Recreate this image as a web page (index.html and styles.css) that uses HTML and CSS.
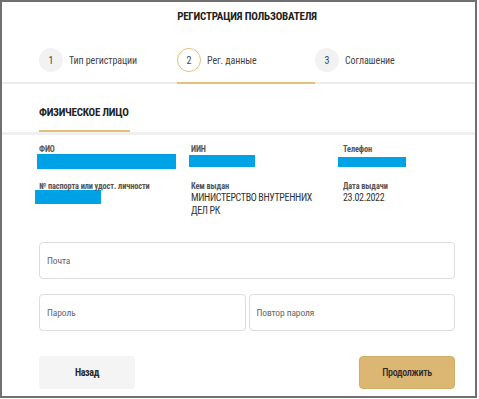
FILE: index.html
```html
<!DOCTYPE html>
<html lang="ru">
<head>
    <meta charset="UTF-8">
    <meta name="viewport" content="width=device-width, initial-scale=1.0">
    <title>Регистрация пользователя</title>
    <link rel="stylesheet" href="styles.css">
</head>
<body>
    <div class="frame">
        <h1 class="title">РЕГИСТРАЦИЯ ПОЛЬЗОВАТЕЛЯ</h1>

        <div class="steps">
            <div class="step">
                <span class="step-num">1</span>
                <span class="step-label">Тип регистрации</span>
            </div>
            <div class="step active">
                <span class="step-num">2</span>
                <span class="step-label">Рег. данные</span>
            </div>
            <div class="step">
                <span class="step-num">3</span>
                <span class="step-label">Соглашение</span>
            </div>
        </div>

        <div class="tabs">
            <div class="tab active">ФИЗИЧЕСКОЕ ЛИЦО</div>
        </div>

        <div class="info">
            <div class="field">
                <div class="field-label">ФИО</div>
                <div class="redact redact-name"></div>
            </div>
            <div class="field">
                <div class="field-label">ИИН</div>
                <div class="redact redact-iin"></div>
            </div>
            <div class="field">
                <div class="field-label">Телефон</div>
                <div class="redact redact-phone"></div>
            </div>
            <div class="field">
                <div class="field-label">№ паспорта или удост. личности</div>
                <div class="redact redact-doc"></div>
            </div>
            <div class="field">
                <div class="field-label">Кем выдан</div>
                <div class="field-value">МИНИСТЕРСТВО ВНУТРЕННИХ ДЕЛ РК</div>
            </div>
            <div class="field">
                <div class="field-label">Дата выдачи</div>
                <div class="field-value">23.02.2022</div>
            </div>
        </div>

        <form class="form">
            <input class="input" type="email" placeholder="Почта">
            <div class="row">
                <input class="input" type="password" placeholder="Пароль">
                <input class="input" type="password" placeholder="Повтор пароля">
            </div>
            <div class="actions">
                <button type="button" class="btn btn-back">Назад</button>
                <button type="button" class="btn btn-next">Продолжить</button>
            </div>
        </form>
    </div>
</body>
</html>
```

FILE: styles.css
```css
:root {
    --gold: #e3c07e;
    --gold-btn: #dbb773;
    --text: #2b2b2b;
    --muted: #555;
    --line: #ececec;
    --blue: #00a2e6;
    --font: 'Roboto Condensed', Roboto, 'Liberation Sans', sans-serif;
}

* {
    margin: 0;
    padding: 0;
    box-sizing: border-box;
}

body {
    font-family: var(--font);
    background: #fff;
    color: var(--text);
}

.frame {
    width: 477px;
    height: 398px;
    border: 2px solid #707070;
    background: #fff;
    overflow: hidden;
}

.title {
    font-size: 11px;
    font-weight: 700;
    line-height: 13px;
    letter-spacing: -0.2px;
    text-align: center;
    padding: 8px 20px 13px 37px;
    color: #222;
}

/* шаги */
.steps {
    display: flex;
    padding: 0 20px 0 37px;
    border-bottom: 2px solid var(--line);
}

.step {
    width: 138px;
    flex-shrink: 0;
    display: flex;
    align-items: center;
    gap: 6px;
    padding: 12px 0 10px;
    margin-bottom: -2px;
    border-bottom: 2px solid transparent;
}

.step.active {
    border-bottom-color: var(--gold);
}

.step-num {
    width: 24px;
    height: 24px;
    flex-shrink: 0;
    border-radius: 50%;
    background: #f2f2f2;
    display: flex;
    align-items: center;
    justify-content: center;
    font-size: 10px;
    color: #444;
}

.step.active .step-num {
    background: #fff;
    border: 1px solid var(--gold);
}

.step-label {
    font-size: 10px;
    letter-spacing: -0.1px;
    color: #444;
    white-space: nowrap;
}

/* вкладка */
.tabs {
    display: flex;
    padding: 0 20px 0 37px;
    border-bottom: 3px solid #f0f0f0;
}

.tab {
    font-size: 11px;
    font-weight: 700;
    line-height: 14px;
    letter-spacing: -0.25px;
    white-space: nowrap;
    color: #222;
    padding: 22px 0 10px;
    width: 91px;
    border-bottom: 2px solid var(--gold);
}

/* данные */
.info {
    display: grid;
    grid-template-columns: 152px 152px 152px;
    row-gap: 12px;
    padding: 9px 0 0 37px;
}

.field-label {
    font-size: 8.3px;
    font-weight: 700;
    line-height: 10px;
    letter-spacing: -0.1px;
    color: var(--muted);
    white-space: nowrap;
}

.field-value {
    font-size: 10px;
    line-height: 13px;
    letter-spacing: -0.35px;
    color: #333;
    width: 130px;
}

.redact {
    background: var(--blue);
}

.redact-name {
    width: 139px;
    height: 15px;
    margin-left: -2px;
}

.redact-iin {
    width: 66px;
    height: 12px;
    margin: 1px 0 0 -2px;
}

.redact-phone {
    width: 68px;
    height: 10px;
    margin: 3px 0 0 -5px;
}

.redact-doc {
    width: 66px;
    height: 14px;
    margin: -1px 0 0 -4px;
}

/* форма */
.form {
    display: flex;
    flex-direction: column;
    gap: 15px;
    padding: 0 20px 0 37px;
    margin-top: 25px;
}

.row {
    display: flex;
    gap: 3px;
}

.input {
    width: 100%;
    height: 37px;
    border: 1px solid #dcdce3;
    border-radius: 4px;
    padding: 0 7px;
    font-family: var(--font);
    font-size: 9.5px;
    letter-spacing: -0.1px;
    color: #333;
    outline: none;
}

.input::placeholder {
    color: #666;
}

.actions {
    display: flex;
    justify-content: space-between;
    margin-top: 10px;
}

.btn {
    width: 96px;
    height: 33px;
    border-radius: 4px;
    border: none;
    font-family: var(--font);
    font-size: 10px;
    font-weight: 700;
    letter-spacing: -0.3px;
    color: #2b2b2b;
}

.btn-back {
    background: #f4f4f4;
}

.btn-next {
    background: var(--gold-btn);
    border: 1px solid #d2ad66;
    font-weight: 500;
}
```
